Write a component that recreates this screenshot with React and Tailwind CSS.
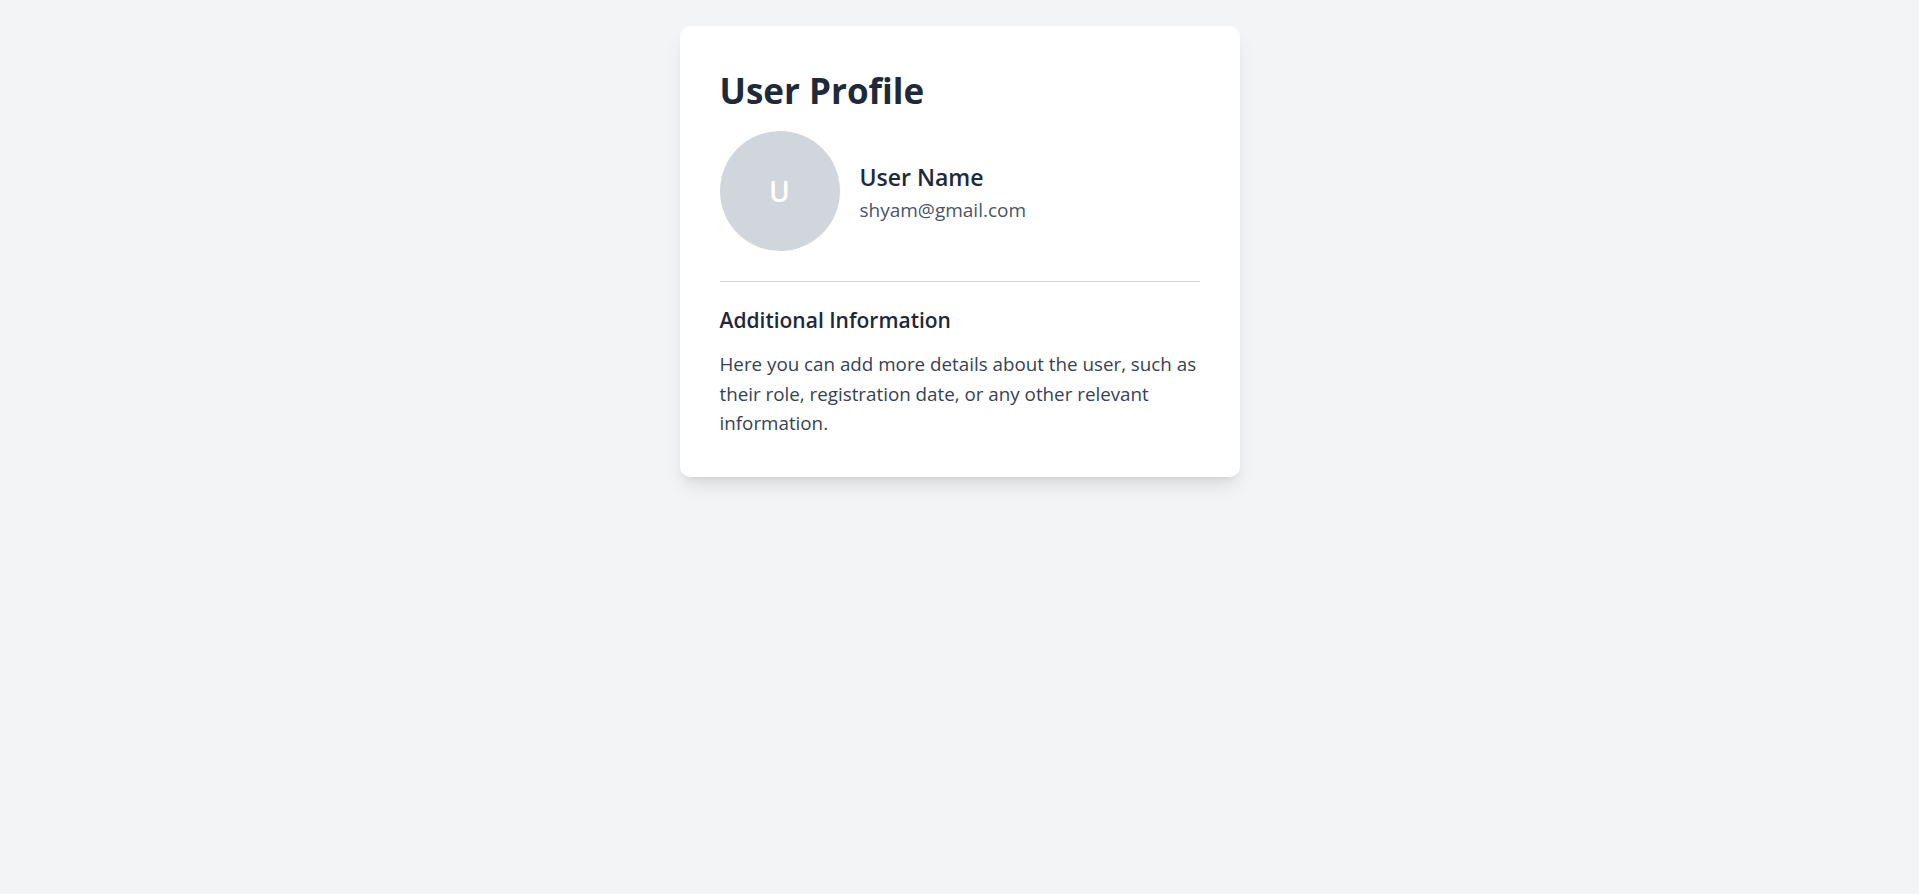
export default function App() {
  return (
    <div
      className="min-h-screen bg-gray-100 pt-[26px] flex justify-center items-start"
      style={{ fontFamily: '"Open Sans", "Noto Sans", sans-serif' }}
    >
      <div className="w-[560px] bg-white rounded-[10px] shadow-[0_12px_19px_-4px_rgba(0,0,0,0.1),0_5px_8px_-5px_rgba(0,0,0,0.1)] px-10 pt-[42px] pb-[38px]">
        <h1 className="text-[35px] leading-[45px] font-bold text-gray-800 mb-[18px]">
          User Profile
        </h1>
        <div className="flex items-center gap-5">
          <div className="w-[120px] h-[120px] rounded-full bg-gray-300 flex items-center justify-center text-white text-[28px] font-semibold shrink-0">
            U
          </div>
          <div className="pt-[3px]">
            <h2 className="text-[23px] leading-[35px] font-semibold text-gray-800">User Name</h2>
            <p className="text-[19px] leading-[30px] text-gray-600">shyam@gmail.com</p>
          </div>
        </div>
        <hr className="mt-[30px] mb-[21px] border-gray-300" />
        <h3 className="text-[21px] leading-[35px] font-semibold text-gray-800 mb-[12px]">
          Additional Information
        </h3>
        <p className="text-[18.8px] leading-[29.5px] text-gray-700">
          Here you can add more details about the user, such as their role, registration date, or any other relevant information.
        </p>
      </div>
    </div>
  );
}
